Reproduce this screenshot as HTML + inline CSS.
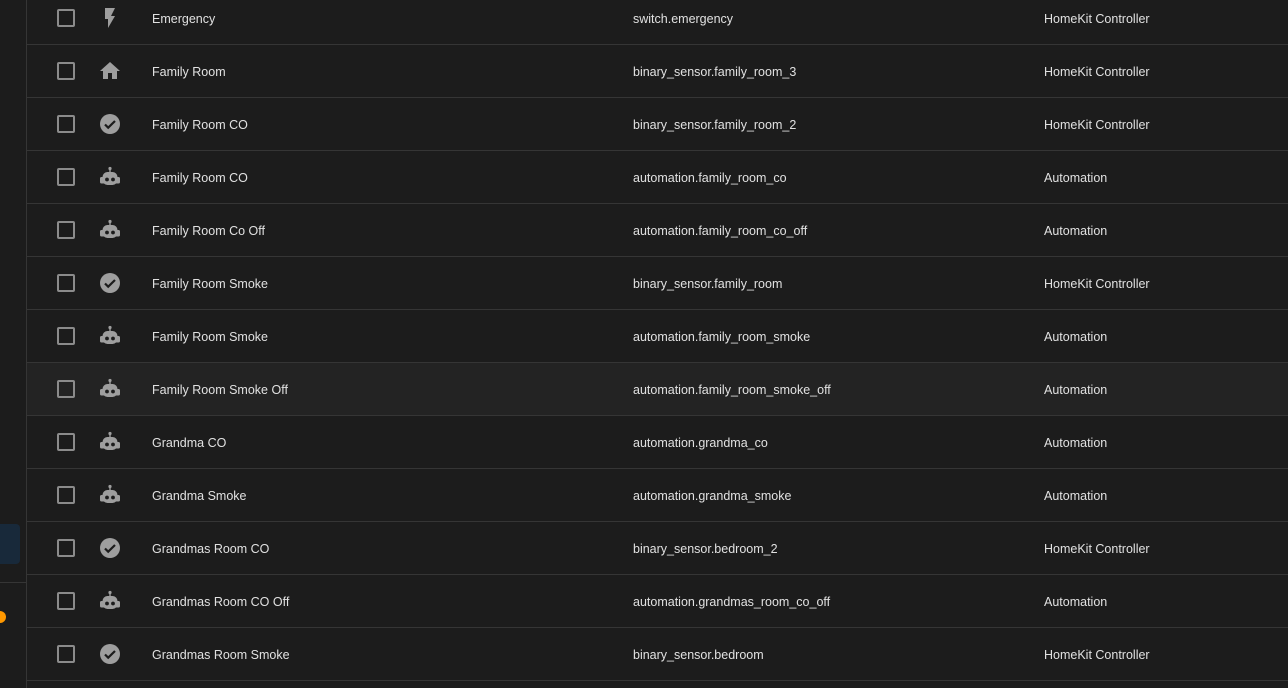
<!DOCTYPE html>
<html><head><style>
body{margin:0;width:1288px;height:688px;background:#1c1c1c;overflow:hidden;font-family:"Liberation Sans",sans-serif;font-size:12.5px;color:#e1e1e1;position:relative}
.side{position:absolute;left:0;top:0;width:26px;height:688px;background:#1c1c1c;border-right:1px solid #353535}
.sel{position:absolute;left:0;top:524px;width:20px;height:40px;background:#18293a;border-radius:0 4px 4px 0}
.div{position:absolute;left:0;top:582px;width:26px;height:1px;background:#353535}
.dot{position:absolute;left:-6px;top:611px;width:12px;height:12px;border-radius:50%;background:#ff9800}
.row{position:absolute;left:27px;width:1261px;height:52px;border-bottom:1px solid #353535}
.row.h{background:#232323}
.cb{position:absolute;left:30px;top:17px;width:14px;height:14px;border:2px solid #8b8b8b;border-radius:2px}
.ic{position:absolute;left:71px;top:14px;width:24px;height:24px}
.t{position:absolute;top:19px;line-height:16px;white-space:nowrap}
</style></head><body>
<div class="side"><div class="sel"></div><div class="div"></div><div class="dot"></div></div>
<svg width="0" height="0" style="position:absolute">
<defs>
<g id="bolt"><path d="M7 2v11h3v9l7-12h-4l4-8z" fill="#9e9e9e"/></g>
<g id="home"><path d="M10 20v-6h4v6h5v-8h3L12 3 2 12h3v8z" fill="#9e9e9e"/></g>
<g id="chk"><circle cx="12" cy="12" r="10" fill="#9e9e9e"/><path d="M7 12.5l3.2 3.2L17 9" stroke="#1c1c1c" stroke-width="2.2" fill="none"/></g>
<g id="bot"><circle cx="12" cy="3.5" r="1.6" fill="#9e9e9e"/><rect x="11.3" y="4" width="1.4" height="4" fill="#9e9e9e"/><rect x="4.5" y="7" width="15" height="13" rx="5" fill="#9e9e9e"/><rect x="2" y="12" width="20" height="6.5" rx="1.5" fill="#9e9e9e"/><circle cx="9" cy="14.5" r="1.9" fill="#1c1c1c"/><circle cx="15" cy="14.5" r="1.9" fill="#1c1c1c"/></g>
</defs></svg>
<div class="row" style="top:-8px"><div class="cb"></div><svg class="ic" viewBox="0 0 24 24"><use href="#bolt"/></svg><div class="t" style="left:125px">Emergency</div><div class="t" style="left:606px">switch.emergency</div><div class="t" style="left:1017px">HomeKit Controller</div></div>
<div class="row" style="top:45px"><div class="cb"></div><svg class="ic" viewBox="0 0 24 24"><use href="#home"/></svg><div class="t" style="left:125px">Family Room</div><div class="t" style="left:606px">binary_sensor.family_room_3</div><div class="t" style="left:1017px">HomeKit Controller</div></div>
<div class="row" style="top:98px"><div class="cb"></div><svg class="ic" viewBox="0 0 24 24"><use href="#chk"/></svg><div class="t" style="left:125px">Family Room CO</div><div class="t" style="left:606px">binary_sensor.family_room_2</div><div class="t" style="left:1017px">HomeKit Controller</div></div>
<div class="row" style="top:151px"><div class="cb"></div><svg class="ic" viewBox="0 0 24 24"><use href="#bot"/></svg><div class="t" style="left:125px">Family Room CO</div><div class="t" style="left:606px">automation.family_room_co</div><div class="t" style="left:1017px">Automation</div></div>
<div class="row" style="top:204px"><div class="cb"></div><svg class="ic" viewBox="0 0 24 24"><use href="#bot"/></svg><div class="t" style="left:125px">Family Room Co Off</div><div class="t" style="left:606px">automation.family_room_co_off</div><div class="t" style="left:1017px">Automation</div></div>
<div class="row" style="top:257px"><div class="cb"></div><svg class="ic" viewBox="0 0 24 24"><use href="#chk"/></svg><div class="t" style="left:125px">Family Room Smoke</div><div class="t" style="left:606px">binary_sensor.family_room</div><div class="t" style="left:1017px">HomeKit Controller</div></div>
<div class="row" style="top:310px"><div class="cb"></div><svg class="ic" viewBox="0 0 24 24"><use href="#bot"/></svg><div class="t" style="left:125px">Family Room Smoke</div><div class="t" style="left:606px">automation.family_room_smoke</div><div class="t" style="left:1017px">Automation</div></div>
<div class="row h" style="top:363px"><div class="cb"></div><svg class="ic" viewBox="0 0 24 24"><use href="#bot"/></svg><div class="t" style="left:125px">Family Room Smoke Off</div><div class="t" style="left:606px">automation.family_room_smoke_off</div><div class="t" style="left:1017px">Automation</div></div>
<div class="row" style="top:416px"><div class="cb"></div><svg class="ic" viewBox="0 0 24 24"><use href="#bot"/></svg><div class="t" style="left:125px">Grandma CO</div><div class="t" style="left:606px">automation.grandma_co</div><div class="t" style="left:1017px">Automation</div></div>
<div class="row" style="top:469px"><div class="cb"></div><svg class="ic" viewBox="0 0 24 24"><use href="#bot"/></svg><div class="t" style="left:125px">Grandma Smoke</div><div class="t" style="left:606px">automation.grandma_smoke</div><div class="t" style="left:1017px">Automation</div></div>
<div class="row" style="top:522px"><div class="cb"></div><svg class="ic" viewBox="0 0 24 24"><use href="#chk"/></svg><div class="t" style="left:125px">Grandmas Room CO</div><div class="t" style="left:606px">binary_sensor.bedroom_2</div><div class="t" style="left:1017px">HomeKit Controller</div></div>
<div class="row" style="top:575px"><div class="cb"></div><svg class="ic" viewBox="0 0 24 24"><use href="#bot"/></svg><div class="t" style="left:125px">Grandmas Room CO Off</div><div class="t" style="left:606px">automation.grandmas_room_co_off</div><div class="t" style="left:1017px">Automation</div></div>
<div class="row" style="top:628px"><div class="cb"></div><svg class="ic" viewBox="0 0 24 24"><use href="#chk"/></svg><div class="t" style="left:125px">Grandmas Room Smoke</div><div class="t" style="left:606px">binary_sensor.bedroom</div><div class="t" style="left:1017px">HomeKit Controller</div></div>
</body></html>
